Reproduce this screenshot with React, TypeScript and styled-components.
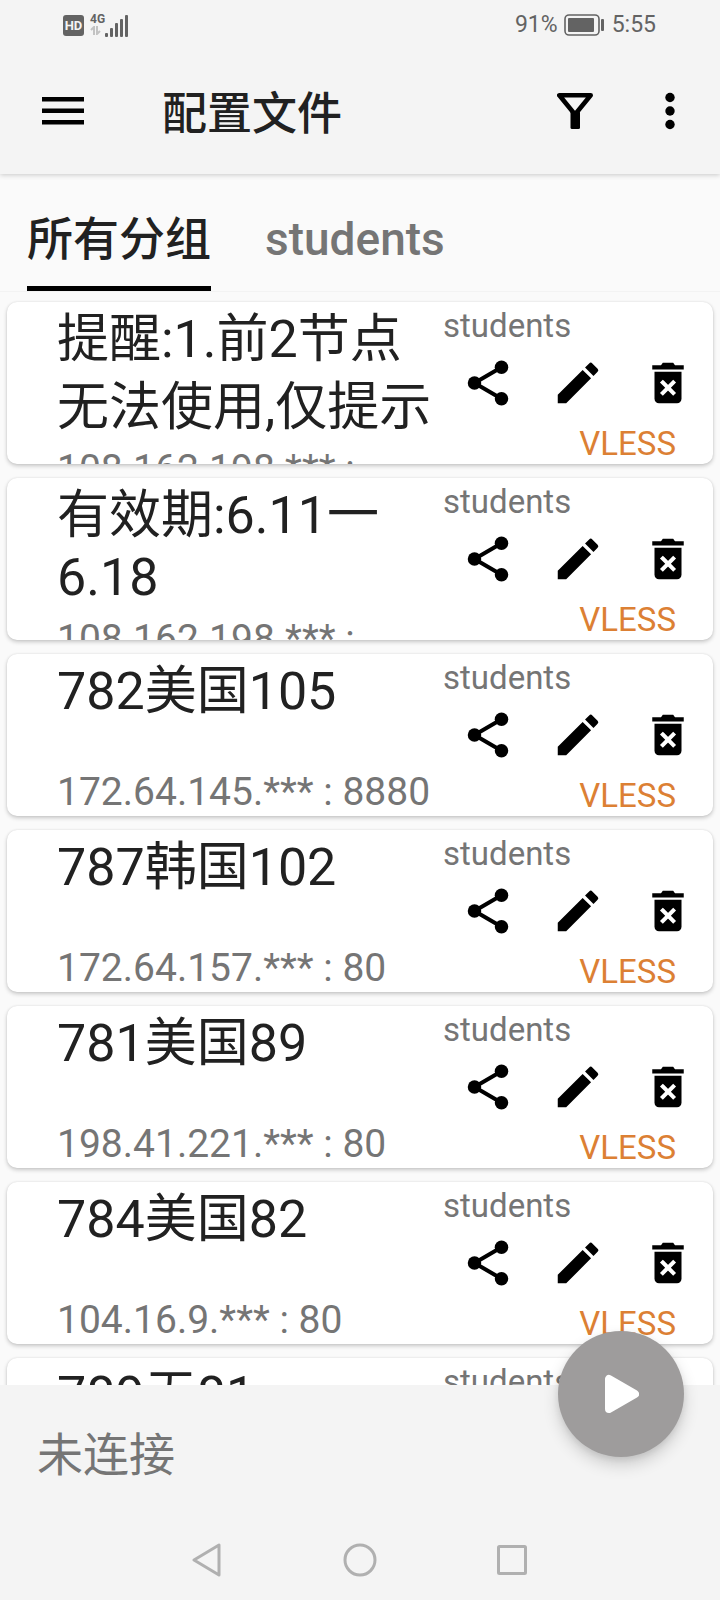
import React from "react";
import styled, { createGlobalStyle } from "styled-components";
import { MdEdit } from "react-icons/md";

const GlobalStyle = createGlobalStyle`
  * {
    box-sizing: border-box;
  }
  body {
    margin: 0;
    background: #fafafa;
    color: #212121;
    font-family: Roboto, "Noto Sans CJK SC", sans-serif;
  }
  button {
    margin: 0;
    padding: 0;
    border: 0;
    background: none;
    color: inherit;
    font: inherit;
    cursor: pointer;
  }
  svg {
    display: block;
  }
`;

const Screen = styled.div`
  display: flex;
  flex-direction: column;
  height: 100vh;
  overflow: hidden;
`;

const TopArea = styled.header`
  position: relative;
  flex: none;
  background: #f4f4f4;
  box-shadow: 0 1px 5px rgba(0, 0, 0, 0.2);
`;

const StatusBar = styled.div`
  display: flex;
  align-items: center;
  justify-content: space-between;
  height: 50px;
  padding: 0 64px 0 63px;
  color: #636363;
`;

const StatusGroup = styled.div`
  display: flex;
  align-items: center;
  gap: 6px;
  font-size: 23px;
  line-height: 28px;
`;

const HdBadge = styled.span`
  width: 21px;
  height: 21px;
  border-radius: 3px;
  background: #636363;
  color: #f4f4f4;
  font-size: 13px;
  font-weight: 700;
  line-height: 21px;
  text-align: center;
`;

const Network = styled.span`
  display: flex;
  align-items: flex-end;
`;

const NetworkType = styled.span`
  display: flex;
  flex-direction: column;
  align-items: flex-start;
  height: 24px;
  font-size: 12px;
  font-weight: 700;
  line-height: 13px;
`;

const Toolbar = styled.div`
  display: flex;
  align-items: center;
  height: 124px;
  padding: 0 23px 2px 42px;
`;

const ToolButton = styled.button`
  display: flex;
  align-items: center;
  justify-content: center;
  width: 54px;
  height: 54px;
  color: #000;
`;

const MenuButton = styled(ToolButton)`
  width: 42px;
`;

const PageTitle = styled.h1`
  flex: 1;
  margin: 0 0 0 78px;
  padding-top: 8px;
  font-size: 45px;
  font-weight: 500;
  line-height: 56px;
`;

const ToolActions = styled.div`
  display: flex;
  gap: 41px;
`;

const Tabs = styled.nav`
  display: flex;
  flex: none;
  gap: 54px;
  height: 118px;
  padding: 0 27px;
  border-bottom: 1px solid #f3f3f3;
`;

const Tab = styled.button<{ $active?: boolean }>`
  padding-top: 18px;
  border-bottom: 5px solid ${(p) => (p.$active ? "#000" : "transparent")};
  color: ${(p) => (p.$active ? "#212121" : "#757575")};
  font-size: 46px;
  font-weight: 500;
  line-height: 60px;
`;

const ProfileList = styled.ul`
  display: flex;
  flex: 1 1 0;
  flex-direction: column;
  gap: 14px;
  min-height: 0;
  margin: 0;
  padding: 10px 7px;
  overflow-y: auto;
  scrollbar-width: none;
  list-style: none;
`;

const Card = styled.li`
  display: flex;
  flex: none;
  height: 162px;
  padding-left: 50px;
  border-radius: 10px;
  background: #fff;
  box-shadow: 0 2px 4px rgba(0, 0, 0, 0.2), 0 0 2px rgba(0, 0, 0, 0.1);
  overflow: hidden;
`;

const Details = styled.div`
  display: flex;
  flex: 1;
  flex-direction: column;
  gap: 7px;
  justify-content: space-between;
  min-width: 0;
  padding: 1px 0;
`;

const Name = styled.div`
  flex: none;
  font-size: 52px;
  line-height: 62px;
  white-space: nowrap;
`;

const NameLine = styled.div<{ $han: boolean }>`
  padding-top: ${(p) => (p.$han ? 6 : 0)}px;
`;

const Address = styled.div`
  flex: none;
  color: #757575;
  font-size: 39px;
  line-height: 46px;
  white-space: nowrap;
`;

const Side = styled.div`
  display: flex;
  flex: none;
  flex-direction: column;
  padding: 4px 0 1px;
`;

const Group = styled.div`
  color: #757575;
  font-size: 33px;
  line-height: 39px;
`;

const Actions = styled.div`
  display: flex;
`;

const ActionButton = styled.button`
  display: flex;
  align-items: center;
  justify-content: center;
  width: 90px;
  height: 76px;
  color: #000;
  font-size: 54px;
`;

const Protocol = styled.div`
  margin-top: auto;
  padding-right: 37px;
  color: #dc8034;
  font-size: 33px;
  line-height: 39px;
  text-align: right;
`;

const BottomArea = styled.footer`
  position: relative;
  flex: none;
  background: #f4f4f4;
`;

const Connection = styled.div`
  padding: 40px 37px 35px;
  color: #757575;
  font-size: 46px;
  line-height: 60px;
`;

const StartButton = styled.button`
  position: absolute;
  top: -54px;
  right: 36px;
  display: flex;
  align-items: center;
  justify-content: center;
  width: 126px;
  height: 126px;
  border-radius: 50%;
  background: #9e9c9c;
  color: #fff;
  box-shadow: 0 8px 16px rgba(0, 0, 0, 0.16), 0 3px 6px rgba(0, 0, 0, 0.08);
`;

const SystemNav = styled.nav`
  display: flex;
  align-items: center;
  justify-content: center;
  gap: 76px;
  height: 80px;
`;

const NavButton = styled.button`
  display: flex;
  align-items: center;
  justify-content: center;
  width: 76px;
  height: 76px;
`;

const navStroke = {
  fill: "none",
  stroke: "#b0b0b0",
  strokeWidth: 3,
  strokeLinejoin: "round" as const,
};

const profiles = [
  { name: ["提醒:1.前2节点", "无法使用,仅提示"], address: "108.162.198.*** :" },
  { name: ["有效期:6.11一", "6.18"], address: "108.162.198.*** :" },
  { name: ["782美国105"], address: "172.64.145.*** : 8880" },
  { name: ["787韩国102"], address: "172.64.157.*** : 80" },
  { name: ["781美国89"], address: "198.41.221.*** : 80" },
  { name: ["784美国82"], address: "104.16.9.*** : 80" },
  { name: ["789无81"], address: "104.16.9.*** : 80" },
];

const hasHan = (text: string) => /[\u4e00-\u9fff]/.test(text);

function SignalIcon() {
  return (
    <svg width="23" height="23" viewBox="0 0 23 23" fill="#636363" aria-hidden="true">
      <rect x="0" y="19" width="3" height="4" rx="1" />
      <rect x="5" y="14" width="3" height="9" rx="1" />
      <rect x="10" y="9" width="3" height="14" rx="1" />
      <rect x="15" y="5" width="3" height="18" rx="1" />
      <rect x="20" y="1" width="3" height="22" rx="1" />
    </svg>
  );
}

function BatteryIcon() {
  return (
    <svg width="42" height="22" viewBox="0 0 42 22" aria-hidden="true">
      <rect x="1" y="1" width="34" height="20" rx="4" fill="none" stroke="#636363" strokeWidth="1.6" />
      <rect x="4" y="4" width="26" height="14" rx="1" fill="#636363" />
      <rect x="37" y="5" width="3" height="12" rx="1" fill="#636363" />
    </svg>
  );
}

function ShareIcon() {
  return (
    <svg width="54" height="54" viewBox="0 0 24 24" fill="currentColor">
      <circle cx="18" cy="5" r="3" />
      <circle cx="6" cy="12" r="3" />
      <circle cx="18" cy="19" r="3" />
      <path d="M18 5 L6 12 L18 19" fill="none" stroke="currentColor" strokeWidth="1.8" />
    </svg>
  );
}

function DeleteIcon() {
  return (
    <svg width="54" height="54" viewBox="0 0 24 24" fill="currentColor">
      <path d="M5 4.100H8.900L9.700 3H14.300L15.100 4.100H19V6H5Z" />
      <path d="M6 7H18V19A2 2 0 0 1 16 21H8A2 2 0 0 1 6 19Z" />
      <path
        d="M9.700 11.800 L14.300 16.400 M14.300 11.800 L9.700 16.400"
        fill="none"
        stroke="#fff"
        strokeWidth="1.800"
        strokeLinecap="square"
      />
    </svg>
  );
}

function ProfileCard({ name, address }: { name: string[]; address: string }) {
  return (
    <Card>
      <Details>
        <Name>
          {name.map((line) => (
            <NameLine key={line} $han={hasHan(line)}>
              {line}
            </NameLine>
          ))}
        </Name>
        <Address>{address}</Address>
      </Details>
      <Side>
        <Group>students</Group>
        <Actions>
          <ActionButton aria-label="分享">
            <ShareIcon />
          </ActionButton>
          <ActionButton aria-label="编辑">
            <MdEdit />
          </ActionButton>
          <ActionButton aria-label="删除">
            <DeleteIcon />
          </ActionButton>
        </Actions>
        <Protocol>VLESS</Protocol>
      </Side>
    </Card>
  );
}

export default function App() {
  return (
    <>
      <GlobalStyle />
      <Screen>
        <TopArea>
          <StatusBar>
            <StatusGroup>
              <HdBadge>HD</HdBadge>
              <Network>
                <NetworkType>
                  4G
                  <svg width="11" height="9" viewBox="0 0 11 9" fill="none" stroke="#c2c2c2" strokeWidth="2" aria-hidden="true">
                    <path d="M1 4 L4 1 V9 M7 0 V8 L10 5" />
                  </svg>
                </NetworkType>
                <SignalIcon />
              </Network>
            </StatusGroup>
            <StatusGroup>
              91%
              <BatteryIcon />
              5:55
            </StatusGroup>
          </StatusBar>
          <Toolbar>
            <MenuButton aria-label="菜单">
              <svg width="42" height="28" viewBox="0 0 42 28" fill="currentColor">
                <path d="M0 0h42v4.500H0zM0 11.500h42v4.500H0zM0 23h42v4.500H0z" />
              </svg>
            </MenuButton>
            <PageTitle>配置文件</PageTitle>
            <ToolActions>
              <ToolButton aria-label="筛选">
                <svg width="36" height="36" viewBox="0 0 36 36">
                  <path
                    d="M2.300 2.300H33.700L18 21.500Z"
                    fill="none"
                    stroke="currentColor"
                    strokeWidth="4.600"
                    strokeLinejoin="round"
                  />
                  <rect x="13.500" y="18" width="9.500" height="18" rx="1.500" fill="currentColor" />
                </svg>
              </ToolButton>
              <ToolButton aria-label="更多">
                <svg width="10" height="38" viewBox="0 0 10 38" fill="currentColor">
                  <circle cx="5" cy="5.500" r="4.700" />
                  <circle cx="5" cy="19" r="4.700" />
                  <circle cx="5" cy="32.500" r="4.700" />
                </svg>
              </ToolButton>
            </ToolActions>
          </Toolbar>
        </TopArea>

        <Tabs>
          <Tab $active>所有分组</Tab>
          <Tab>students</Tab>
        </Tabs>

        <ProfileList>
          {profiles.map((p) => (
            <ProfileCard key={p.name.join("")} {...p} />
          ))}
        </ProfileList>

        <BottomArea>
          <Connection>未连接</Connection>
          <StartButton aria-label="连接">
            <svg width="36" height="40" viewBox="0 0 36 40">
              <path
                d="M6 5 V35 L32 20 Z"
                fill="currentColor"
                stroke="currentColor"
                strokeWidth="8"
                strokeLinejoin="round"
              />
            </svg>
          </StartButton>
          <SystemNav>
            <NavButton aria-label="返回">
              <svg width="32" height="34" viewBox="0 0 32 34" {...navStroke}>
                <path d="M27 2 V32 L2 17 Z" />
              </svg>
            </NavButton>
            <NavButton aria-label="主页">
              <svg width="34" height="34" viewBox="0 0 34 34" {...navStroke}>
                <circle cx="17" cy="17" r="15" />
              </svg>
            </NavButton>
            <NavButton aria-label="最近任务">
              <svg width="30" height="30" viewBox="0 0 30 30" {...navStroke}>
                <rect x="1.500" y="1.500" width="27" height="27" rx="1" />
              </svg>
            </NavButton>
          </SystemNav>
        </BottomArea>
      </Screen>
    </>
  );
}
